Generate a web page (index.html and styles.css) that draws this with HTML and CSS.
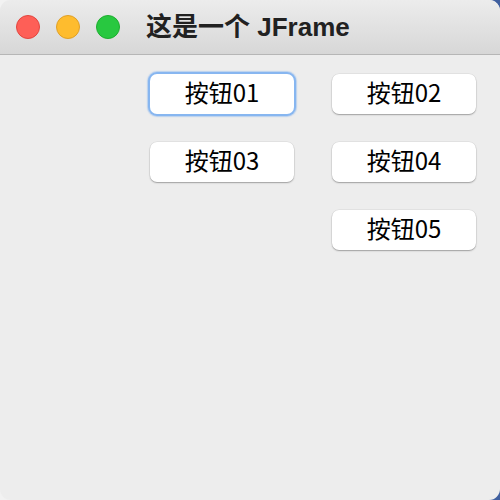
FILE: index.html
```html
<!DOCTYPE html>
<html lang="zh">
<head>
<meta charset="utf-8">
<title>这是一个 JFrame</title>
<link rel="stylesheet" href="styles.css">
</head>
<body>
<div class="window">
  <div class="titlebar">
    <div class="lights">
      <span class="light red"></span>
      <span class="light yellow"></span>
      <span class="light green"></span>
    </div>
    <div class="title">这是一个 JFrame</div>
  </div>
  <div class="content">
    <div class="grid">
      <button class="btn focused">按钮01</button>
      <button class="btn">按钮02</button>
      <button class="btn">按钮03</button>
      <button class="btn">按钮04</button>
      <button class="btn col2">按钮05</button>
    </div>
  </div>
</div>
</body>
</html>
```
FILE: styles.css
```css
html, body {
  margin: 0;
  padding: 0;
}
body {
  width: 500px;
  height: 500px;
  background: linear-gradient(to right, #f2f2f2 0, #f2f2f2 470px, #3f5f9f 495px);
  overflow: hidden;
}
.window {
  width: 500px;
  height: 500px;
  border-radius: 11px;
  overflow: hidden;
  background: #ededed;
  display: flex;
  flex-direction: column;
}
.titlebar {
  height: 54px;
  flex: none;
  background: linear-gradient(to bottom, #ececec, #d7d7d7);
  border-bottom: 1px solid #b6b6b6;
  display: flex;
  align-items: center;
  padding-left: 16px;
}
.lights {
  display: flex;
  gap: 16px;
}
.light {
  width: 24px;
  height: 24px;
  border-radius: 50%;
  box-sizing: border-box;
}
.red { background: #fe5f57; border: 1px solid #e2463f; }
.yellow { background: #febc2e; border: 1px solid #e0a027; }
.green { background: #28c840; border: 1px solid #1eae2f; }
.title {
  margin-left: 26px;
  font-family: "Liberation Sans", "Noto Sans CJK SC", sans-serif;
  font-weight: bold;
  font-size: 26px;
  color: #212121;
  line-height: 1;
  margin-top: -1px;
}
.content {
  flex: 1;
  padding: 19px 24px 0 0;
}
.grid {
  display: grid;
  grid-template-columns: 144px 144px;
  column-gap: 38px;
  row-gap: 28px;
  justify-content: end;
}
.btn {
  height: 40px;
  border: none;
  border-radius: 7px;
  background: #ffffff;
  box-shadow: 0 1px 1.5px rgba(0,0,0,0.3), 0 0 0 0.5px rgba(0,0,0,0.08);
  font-family: "Noto Sans CJK SC", sans-serif;
  font-size: 24px;
  color: #000;
  padding: 0 0 4px 0;
  line-height: 1;
}
.btn.focused {
  box-shadow: 0 0 0 2px #87b6f0, 0 0 1px 3px rgba(135,182,240,0.5);
}
.col2 {
  grid-column: 2;
}
```
